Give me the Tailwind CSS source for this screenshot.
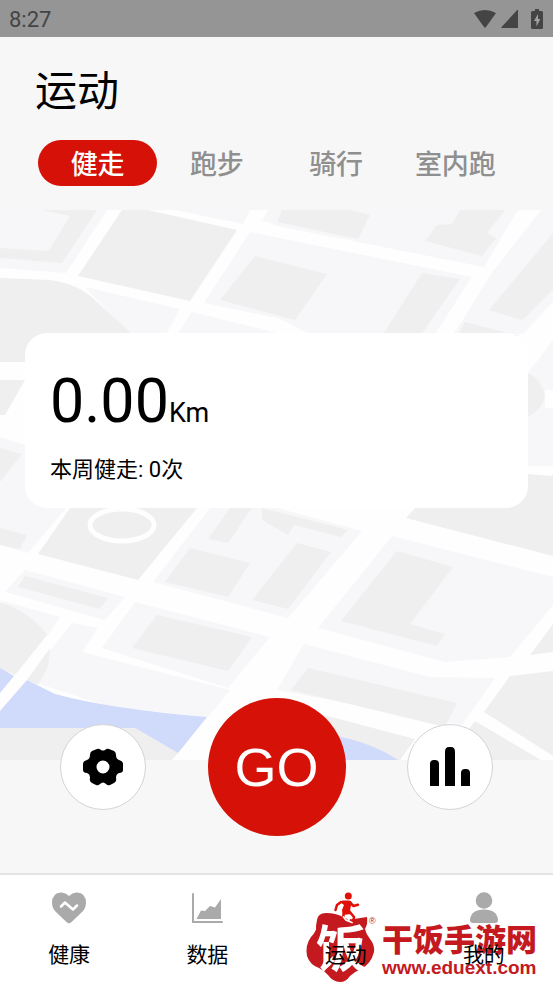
<!DOCTYPE html>
<html lang="zh-CN">
<head>
<meta charset="utf-8">
<meta name="viewport" content="width=device-width, initial-scale=1">
<title>运动</title>
<script src="https://cdn.jsdelivr.net/npm/@tailwindcss/browser@4"></script>
</head>
<body class="flex min-h-screen flex-col bg-[#f7f7f7] font-['Noto_Sans_CJK_SC',sans-serif] text-black">

<!-- Status bar -->
<div class="flex h-[37px] items-center justify-between bg-[#959595] pr-2.5 pl-[9px] text-[#444]">
  <span class="pt-0.5 font-['Roboto',sans-serif] text-[22px]">8:27</span>
  <div class="flex items-center">
    <svg class="h-5 w-6" viewBox="0 0 24 20" fill="currentColor" aria-hidden="true"><path d="M1 4Q12-2 23 4L13 18Q12 19.500 11 18Z"/></svg>
    <svg class="ml-1 h-5 w-[18px]" viewBox="0 0 18 20" fill="currentColor" aria-hidden="true"><path d="M17 1v18H1Q-.2 19 .6 18L15.800 1.500Q17 .4 17 1Z"/></svg>
    <svg class="ml-3 h-5 w-3" viewBox="0 0 12 20" aria-hidden="true"><path fill="currentColor" d="M4 0h4v2h2.500Q12 2 12 3.500v15q0 1.500-1.500 1.500h-9Q0 20 0 18.500v-15Q0 2 1.500 2H4Z"/><path fill="#a2a2a2" d="M7 5 3 12h2.500v5.500L9.300 10H7Z"/></svg>
  </div>
</div>

<header class="px-[35px] pt-[21px]">
  <h1 class="text-[42px] leading-[60px]">运动</h1>
</header>

<div role="tablist" aria-label="运动类型" class="mt-[22px] grid grid-cols-4 px-[38px] text-[27px] font-medium text-[#8f8f8f]">
  <button role="tab" aria-selected="true" class="h-[46px] rounded-full bg-[#d51108] leading-[46px] text-white">健走</button>
  <button role="tab" aria-selected="false" class="h-[46px] rounded-full leading-[46px]">跑步</button>
  <button role="tab" aria-selected="false" class="h-[46px] rounded-full leading-[46px]">骑行</button>
  <button role="tab" aria-selected="false" class="h-[46px] rounded-full leading-[46px] whitespace-nowrap">室内跑</button>
</div>

<main class="flex flex-1 flex-col">
  <!-- Map with the weekly summary over it -->
  <section class="relative mt-6 min-h-[550px] px-[25px] pt-[123px]">
    <svg class="absolute inset-0 h-full w-full" viewBox="0 210 553 550" preserveAspectRatio="xMidYMid slice" aria-hidden="true">
      <rect y="210" width="553" height="550" fill="#fefefe"/>
      <!-- Lots -->
      <g fill="#f7f7fa">
        <path d="M0 210H107L66 273L0 268Z"/>
        <path d="M85 287L180 309L165 336H130Z"/>
        <path d="M175 210H250L243 224Z"/>
        <path d="M268 210H518L484 267L277 226L262 220Z"/>
        <path d="M250 232L472 277L435 334H310L277 318L204 303Z"/>
        <path d="M192 312L277 333H178Z"/>
        <path d="M541 210H553V302L523 334H453L463 320L490 275Z"/>
        <path d="M553 340L528 373V466H553Z"/>
        <path d="M0 437L25 445L66 508L28 553L0 545Z"/>
        <path d="M210 508H277L362 531L288 618L153 582Z"/>
        <path d="M25 570L125 597L105 620L5 592Z"/>
        <path d="M0 600L60 617L47 636Z"/>
        <path d="M72 623L98 628L82 652L230 690L208 717L110 707L27 680Z"/>
        <path d="M135 602L270 637L228 688L102 648Z"/>
        <path d="M392 536L553 577V605L510 657L445 662L318 628Z"/>
        <path d="M304 644L430 677L495 678L462 725L277 690Z"/>
      </g>
      <!-- Buildings and open ground -->
      <g fill="#efefef">
        <path d="M42 210H97L62 263L0 258V248L46 251Q49 251 51 247L70 216Z"/>
        <path d="M122 210H148L237 230L190 301L78 276Z"/>
        <path d="M0 278L50 280Q80 284 97 302L132 334V362H0Z"/>
        <path d="M282 210H350L370 215L358 239L277 222Z"/>
        <path d="M460 210H505L487 233L496 238L482 256L425 241L437 225L452 224Z"/>
        <path d="M255 256L327 274L295 320L220 300Z"/>
        <path d="M422 273L460 279L420 336H382Z"/>
        <path d="M553 233V290L525 318Q521 321 515 318L489 310Z"/>
        <path d="M465 322L500 331L520 336H457Z"/>
        <path d="M528 373Q542 380 545 396Q542 410 528 417Z"/>
        <path d="M0 380H25L5 415H0Z"/>
        <path d="M0 448L22 454L0 482Z"/>
        <path d="M0 528L27 535L20 549L0 545Z"/>
        <path d="M70 508H197L138 580L38 554Z"/>
        <path d="M230 508H252L228 543L208 539Z"/>
        <path d="M190 548L250 563L228 597L165 582Z"/>
        <path d="M262 508L348 530L341 537L294 525L288 535L262 520Z"/>
        <path d="M297 543L331 552L288 609L252 600Z"/>
        <path d="M25 576L108 598L100 609L18 587Z"/>
        <path d="M0 602Q30 612 47 635L15 675L0 669Z"/>
        <path d="M50 648L48 667L38 685L27 680Z"/>
        <path d="M157 615L252 637L228 671L132 648Z"/>
        <path d="M397 551L453 567L410 624L445 634L437 646L341 621Z"/>
        <path d="M415 508H528L553 474V556L406 518Z"/>
        <path d="M528 474L553 476V530H500V508Z"/>
        <path d="M553 624V652L530 655Z"/>
        <path d="M553 671V756L484 712L510 676Z"/>
        <path d="M308 668L457 703L445 727L291 690Z"/>
        <path d="M320 714L415 739L400 760H277Z"/>
        <path d="M475 721L541 760H445Z"/>
        <path d="M0 728H135L178 753L172 760H0Z"/>
      </g>
      <path fill="#fefefe" d="M545 390H553V408H545Z"/>
      <ellipse cx="122" cy="525" rx="32" ry="16" fill="none" stroke="#fefefe" stroke-width="5"/>
      <!-- River -->
      <g fill="#d0dafa">
        <path d="M0 668L14 676L0 693Z"/>
        <path d="M27 680L55 694Q110 709 207 717L178 753L135 728H0V711Z"/>
        <path d="M330 735Q369 741 398 760H277Z"/>
      </g>
    </svg>
    <div class="relative h-[175px] rounded-[22px] bg-white px-[25px] pt-7 font-['Roboto','Noto_Sans_CJK_SC',sans-serif]">
      <p class="flex items-baseline leading-[80px]"><span class="text-[61px]">0.00</span><span class="text-[27px]">Km</span></p>
      <p class="mt-0.5 text-[22px] leading-[30px]">本周健走: 0次</p>
    </div>
  </section>

  <div class="relative -mt-[62px] mb-[37px] flex items-center justify-between px-[60px]">
    <button aria-label="设置" class="flex size-[86px] items-center justify-center rounded-full border border-[#d4d4d4] bg-white">
      <svg class="size-10" viewBox="0 0 40 40" aria-hidden="true"><path fill="#000" fill-rule="evenodd" d="M14 2Q16 1 18 3Q20 4 22 3Q24 1 26 2L31 4Q33 5 33 8Q33 12 36 13Q40 14 40 17V23Q40 26 36 26Q33 27 33 31Q34 34 31 36L27 38Q25 39 23 37Q20 34 17 37Q15 39 13 38L9 36Q6 34 7 31Q7 27 4 26Q0 26 0 23V17Q0 14 4 13Q7 12 7 8Q7 5 9 4ZM20 13.500A6.500 6.500 0 1 0 20 26.500A6.500 6.500 0 1 0 20 13.500Z"/></svg>
    </button>
    <button class="size-[138px] rounded-full bg-[#d51108] font-['Liberation_Sans',Arial,sans-serif] text-[54px] text-white">GO</button>
    <button aria-label="统计" class="flex size-[86px] items-center justify-center rounded-full border border-[#d4d4d4] bg-white">
      <svg class="size-10" viewBox="0 0 40 40" aria-hidden="true"><path fill="#000" d="M0 39V17Q0 13 4 13H5Q9 13 9 17V39ZM15 39V5Q15 0 19 0H21Q25 0 25 5V39ZM31 39V26Q31 22 35 22H36Q40 22 40 26V39Z"/></svg>
    </button>
  </div>
</main>

<nav aria-label="主导航" class="relative border-t-2 border-[#e4e4e4] bg-white">
  <!-- Site watermark -->
  <div class="absolute right-4 bottom-0 flex items-start text-[#c4191e]">
    <svg class="h-[72px] w-[76px] overflow-visible" viewBox="0 0 76 72" aria-label="干饭手游网">
      <path fill="#c4191e" d="M11 8Q12 1 20 1Q30 1 37 5Q42 8 48 7L61 5Q62 12 59 17Q60 22 64 27Q69 33 68 40Q65 52 55 57Q48 60 44 64Q40 70 34 70Q27 70 22 63Q19 59 13 56Q4 53 1 44Q-1 33 5 25Q11 19 10 14Z"/>
      <text x="10" y="55" font-size="50" font-weight="700" fill="#fff" font-family="Noto Sans CJK SC">饭</text>
      <text x="63" y="12" font-size="9" fill="#c4191e" font-family="Liberation Sans">®</text>
    </svg>
    <div class="pt-2">
      <p class="text-[31px] leading-9 font-black">干饭手游网</p>
      <p class="font-['Liberation_Sans',Arial,sans-serif] text-[19px] leading-6 font-bold">www.eduext.com</p>
    </div>
  </div>
  <div class="relative grid h-[109px] grid-cols-4 text-[21px] leading-[30px]">
    <a href="#health" class="flex flex-col items-center pt-[17px]">
      <svg class="h-8 w-[34px]" viewBox="0 0 34 32" aria-hidden="true"><path fill="#aaa" d="M17 4Q21 0 25 .5Q34 1 34 11Q34 17 28 22L19 30.500Q17 32 15 30.500L6 22Q0 17 0 11Q0 1 9 .5Q13 0 17 4Z"/><path fill="none" stroke="#fff" stroke-width="2.500" stroke-linejoin="round" stroke-linecap="round" d="M9 14.500L13 10.500L21 17.500L25 13.500"/></svg>
      <span class="mt-3.5">健康</span>
    </a>
    <a href="#data" class="flex flex-col items-center pt-[17px]">
      <svg class="h-8 w-[31px]" viewBox="0 0 31 32" aria-hidden="true"><path fill="none" stroke="#aaa" stroke-width="2" stroke-linecap="round" d="M1 2V30H30"/><path fill="#aaa" d="M4.500 27L9 18.500L13 19L18 14L23 15.500L29 7V27Z"/></svg>
      <span class="mt-3.5">数据</span>
    </a>
    <a href="#sport" aria-current="page" class="flex flex-col items-center pt-[17px]">
      <svg class="h-8 w-[26px] overflow-visible" viewBox="0 0 26 32" aria-hidden="true"><circle cx="15.300" cy="4" r="3.500" fill="#e01008"/><path fill="none" stroke="#e01008" stroke-width="2.500" stroke-linecap="round" stroke-linejoin="round" d="M8 10L4 13L2.500 18M17 10.500L20.500 14L25 12.800M11 19L10 27M16 19L21 25L20 30"/><path fill="#e01008" d="M7 10Q8 8.500 10 8.500H16Q18 8.500 18.500 10L17 19L18 22L10 23L9 18L11 13Z"/><path fill="none" stroke="#fff" stroke-width="1.800" stroke-linecap="round" d="M10.500 25L13 28L19 30.500M14 24L16 28"/></svg>
      <span class="mt-3.5">运动</span>
    </a>
    <a href="#me" class="flex flex-col items-center pt-[17px]">
      <svg class="h-8 w-7" viewBox="0 0 28 32" fill="#aaa" aria-hidden="true"><circle cx="14" cy="8.500" r="8.300"/><path d="M0 28Q1 17.500 14 17.500T28 28Q28 31 25 31H3Q0 31 0 28Z"/></svg>
      <span class="mt-3.5">我的</span>
    </a>
  </div>
</nav>
</body>
</html>
